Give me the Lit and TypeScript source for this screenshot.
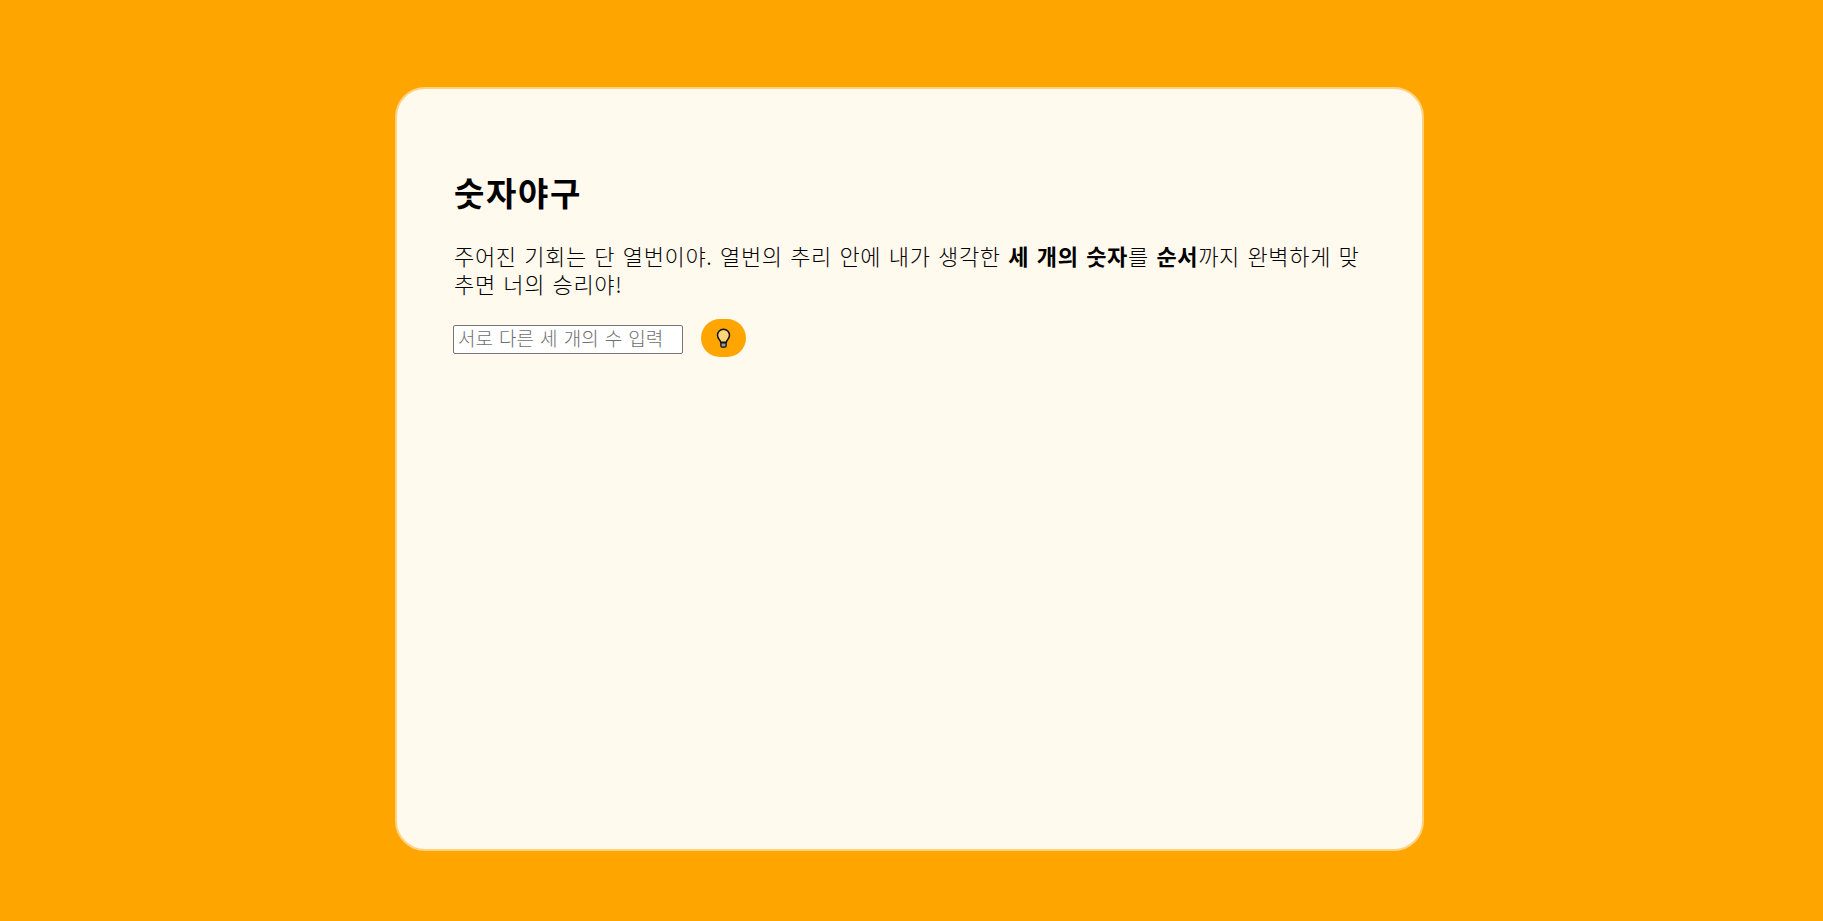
import { LitElement, html, css } from 'lit';
import { customElement } from 'lit/decorators.js';

@customElement('app-root')
export class AppRoot extends LitElement {
  static styles = css`
    :host {
      display: block;
      min-height: 921px;
      padding: 87px 0 0 395px;
      box-sizing: border-box;
      background: #ffa500;
      font-family: 'Noto Sans CJK KR', 'Liberation Sans', sans-serif;
      color: #000;
    }
    .card {
      box-sizing: border-box;
      width: 1029px;
      height: 764px;
      padding: 57px 50px 57px 56px;
      background: #fff9ee;
      border: 2px solid #ffd27f;
      border-radius: 30px;
    }
    h1 {
      margin: 23px 0 0;
      padding-left: 1px;
      font-size: 33px;
      line-height: 46px;
      font-weight: 700;
      letter-spacing: 1.6px;
    }
    p {
      margin: 26px 0 0;
      padding-left: 1px;
      font-size: 22px;
      line-height: 28px;
      font-weight: 300;
      letter-spacing: 0.65px;
      word-spacing: 2px;
    }
    strong {
      font-weight: 700;
    }
    .row {
      display: flex;
      align-items: center;
      gap: 18px;
      margin-top: 22px;
    }
    input {
      box-sizing: border-box;
      width: 230px;
      height: 29px;
      margin-top: 3px;
      padding: 0 4px 5px;
      border: 1px solid #767676;
      border-radius: 2px;
      background: #fff;
      font: inherit;
      font-size: 19px;
      font-weight: 300;
      word-spacing: 1.9px;
    }
    input::placeholder {
      color: #6e6e6e;
      opacity: 1;
    }
    button {
      display: flex;
      align-items: center;
      justify-content: center;
      width: 45px;
      height: 38px;
      padding: 0;
      border: none;
      border-radius: 19px;
      background: #ffa500;
    }
  `;

  render() {
    return html`
      <main class="card">
        <h1>숫자야구</h1>
        <p>주어진 기회는 단 열번이야. 열번의 추리 안에 내가 생각한 <strong>세 개의 숫자</strong>를 <strong>순서</strong>까지 완벽하게 맞추면 너의 승리야!</p>
        <div class="row">
          <input type="text" placeholder="서로 다른 세 개의 수 입력" />
          <button type="button" aria-label="힌트">
            <svg width="15" height="21" viewBox="0 0 16 22">
              <path d="M8 1.2a6.4 6.4 0 0 0-6.4 6.4c0 2.1 1 3.6 2.2 4.9.7.8 1.1 1.6 1.2 2.5h6c.1-.9.5-1.7 1.2-2.5 1.2-1.3 2.2-2.8 2.2-4.9A6.4 6.4 0 0 0 8 1.2z" fill="#ffd77a" stroke="#111" stroke-width="1.6"/>
              <path d="M5.2 15.6h5.6v3.2a1.4 1.4 0 0 1-1.4 1.4H6.6a1.4 1.4 0 0 1-1.4-1.4z" fill="#9a9a9a" stroke="#111" stroke-width="1.4"/>
            </svg>
          </button>
        </div>
      </main>
    `;
  }
}
